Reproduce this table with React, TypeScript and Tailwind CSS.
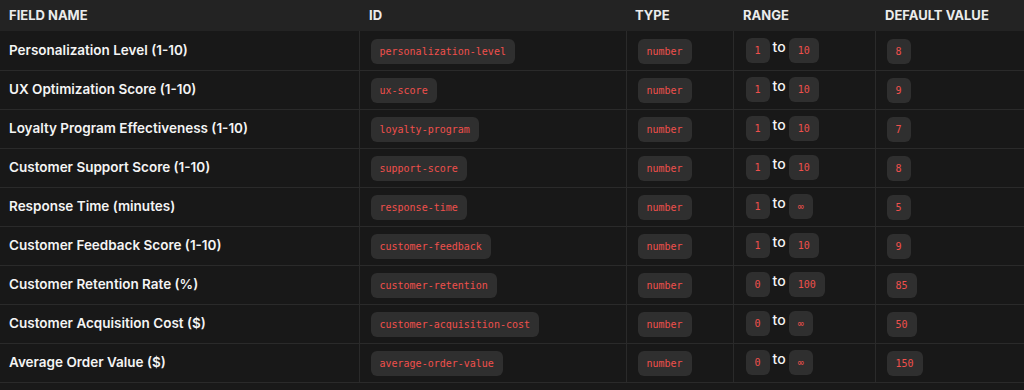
import React from 'react';

type Field = {
  name: string;
  id: string;
  min: string;
  max: string;
  def: string;
};

const fields: Field[] = [
  { name: 'Personalization Level (1-10)', id: 'personalization-level', min: '1', max: '10', def: '8' },
  { name: 'UX Optimization Score (1-10)', id: 'ux-score', min: '1', max: '10', def: '9' },
  { name: 'Loyalty Program Effectiveness (1-10)', id: 'loyalty-program', min: '1', max: '10', def: '7' },
  { name: 'Customer Support Score (1-10)', id: 'support-score', min: '1', max: '10', def: '8' },
  { name: 'Response Time (minutes)', id: 'response-time', min: '1', max: '∞', def: '5' },
  { name: 'Customer Feedback Score (1-10)', id: 'customer-feedback', min: '1', max: '10', def: '9' },
  { name: 'Customer Retention Rate (%)', id: 'customer-retention', min: '0', max: '100', def: '85' },
  { name: 'Customer Acquisition Cost ($)', id: 'customer-acquisition-cost', min: '0', max: '∞', def: '50' },
  { name: 'Average Order Value ($)', id: 'average-order-value', min: '0', max: '∞', def: '150' },
];

const Code: React.FC<{ children: React.ReactNode }> = ({ children }) => (
  <code className="inline-block h-[25px] rounded-md bg-[#2f2f2f] px-[9px] font-['DejaVu_Sans_Mono','Liberation_Mono',monospace] text-[10px] leading-[25px] text-[#f0504c]">
    {children}
  </code>
);

export default function App() {
  return (
    <div className="min-h-[390px] w-full bg-[#191919] font-['Inter','Noto_Sans',sans-serif]">
      <table className="w-[1024px] table-fixed border-collapse">
        <colgroup>
          <col className="w-[359px]" />
          <col className="w-[267px]" />
          <col className="w-[107px]" />
          <col className="w-[142px]" />
          <col className="w-[149px]" />
        </colgroup>
        <thead>
          <tr className="h-[31px] bg-[#232323] text-left text-[13px] font-bold uppercase text-[#ececec]">
            <th className="pl-[9px] font-bold">Field Name</th>
            <th className="pl-[10px] font-bold">ID</th>
            <th className="pl-[9px] font-bold">Type</th>
            <th className="pl-[10px] font-bold">Range</th>
            <th className="pl-[10px] font-bold">Default Value</th>
          </tr>
        </thead>
        <tbody className="bg-[#181818]">
          {fields.map((f) => (
            <tr key={f.id} className="h-[39px] border-b border-[#2a2a2a]">
              <td className="pl-[9px] text-[13.5px] font-semibold text-[#f4f4f4]">{f.name}</td>
              <td className="border-l border-[#2a2a2a] pl-[11px]">
                <Code>{f.id}</Code>
              </td>
              <td className="border-l border-[#2a2a2a] pl-[11px]">
                <Code>number</Code>
              </td>
              <td className="border-l border-[#2a2a2a] pl-[12px]">
                <div className="flex items-start">
                  <Code>{f.min}</Code>
                  <span className="mx-[3px] -mt-[1px] text-[14px] font-medium leading-[20px] text-[#f4f4f4]">to</span>
                  <Code>{f.max}</Code>
                </div>
              </td>
              <td className="border-l border-[#2a2a2a] pl-[11px]">
                <Code>{f.def}</Code>
              </td>
            </tr>
          ))}
        </tbody>
      </table>
    </div>
  );
}
